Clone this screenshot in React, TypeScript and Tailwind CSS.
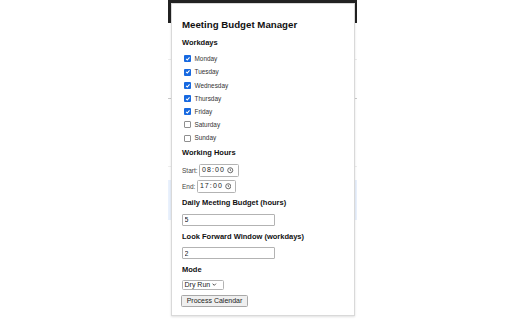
const days: [string, boolean][] = [
  ["Monday", true],
  ["Tuesday", true],
  ["Wednesday", true],
  ["Thursday", true],
  ["Friday", true],
  ["Saturday", false],
  ["Sunday", false],
];

const Check = ({ on }: { on: boolean }) =>
  on ? (
    <span className="flex h-[7px] w-[7px] items-center justify-center rounded-[1px] bg-[#1769e0]">
      <svg width="5.5" height="5.5" viewBox="0 0 10 10">
        <path d="M2 5.2 4.2 7.4 8.2 2.6" fill="none" stroke="#fff" strokeWidth="1.9" />
      </svg>
    </span>
  ) : (
    <span className="h-[7px] w-[7px] rounded-[1px] border border-[#8f8f8f] bg-white" />
  );

const Clock = () => (
  <svg width="6.5" height="6.5" viewBox="0 0 16 16">
    <circle cx="8" cy="8" r="6.3" fill="none" stroke="#222" strokeWidth="1.6" />
    <path d="M8 4.3V8.3l2.6 1.6" fill="none" stroke="#222" strokeWidth="1.5" />
  </svg>
);

const TimeField = ({ label, value }: { label: string; value: string }) => (
  <div className="flex h-[13px] items-center gap-[1.5px]">
    <span className="text-[6.5px] text-[#444]">{label}</span>
    <div className="flex h-[13px] w-[39.5px] items-center justify-between rounded-[1.5px] border border-[#b3b3b3] pl-[2px] pr-[4px]">
      <span className="text-[7px] tracking-[1.1px] text-[#222]">{value}</span>
      <Clock />
    </div>
  </div>
);

const Heading = ({ children, className }: { children: string; className: string }) => (
  <h3 className={`h-[10px] text-[7.5px] leading-[10px] font-bold text-[#111] ${className}`}>{children}</h3>
);

export default function App() {
  return (
    <div className="relative h-[320px] w-[512px] overflow-hidden bg-white font-['Liberation_Sans',Arial,sans-serif]">
      {/* page behind the popup */}
      <div className="ml-[168px] flex w-[189px] flex-col">
        <div className="h-[23px] bg-[#222]" />
        <div className="mt-[36px] h-px bg-[#ececec]" />
        <div className="mt-[38px] h-px bg-[#c9c9c9]" />
        <div className="mt-[67px] h-px bg-[#eeeeee]" />
        <div className="mt-[13px] h-[40px] bg-[#e9f1fd]" />
      </div>

      <div className="absolute left-[171px] top-[3px] flex h-[313px] w-[184px] flex-col border border-[#d9d9d9] bg-white pl-[10px] shadow-[0_1px_2px_rgba(0,0,0,0.12)]">
        <h1 className="mt-[15px] h-[12px] text-[9.7px] leading-[12px] font-bold text-[#111]">Meeting Budget Manager</h1>

        <Heading className="mt-[6.5px]">Workdays</Heading>
        <div className="mt-[4.9px] flex flex-col">
          {days.map(([d, on]) => (
            <label key={d} className="flex h-[13.2px] items-center gap-[3.5px] pl-[2px] text-[6.4px] text-[#333]">
              <Check on={on} />
              {d}
            </label>
          ))}
        </div>

        <Heading className="mt-[2.9px]">Working Hours</Heading>
        <div className="mt-[6.3px]">
          <TimeField label="Start:" value="08:00" />
        </div>
        <div className="mt-[3px]">
          <TimeField label="End:" value="17:00" />
        </div>

        <Heading className="mt-[5.3px]">Daily Meeting Budget (hours)</Heading>
        <input
          readOnly
          value="5"
          className="mt-[5.7px] h-[11.7px] w-[92.5px] rounded-[1px] border border-[#b3b3b3] px-[1.5px] text-[7px] text-[#222] outline-none"
        />

        <Heading className="mt-[6px]">Look Forward Window (workdays)</Heading>
        <input
          readOnly
          value="2"
          className="mt-[5.6px] h-[11.7px] w-[92.5px] rounded-[1px] border border-[#b3b3b3] px-[1.5px] text-[7px] text-[#222] outline-none"
        />

        <Heading className="mt-[6px]">Mode</Heading>
        <div className="mt-[5px] flex h-[10px] w-[41.5px] items-center gap-[2px] rounded-[1.5px] border border-[#b3b3b3] pl-[1.5px] text-[7px] text-[#222]">
          <span>Dry Run</span>
          <svg width="4.5" height="3" viewBox="0 0 8 5">
            <path d="M1 1l3 3 3-3" fill="none" stroke="#222" strokeWidth="1.4" />
          </svg>
        </div>

        <button className="-ml-px mt-[5px] flex h-[12.3px] w-[67px] items-center justify-center rounded-[1.5px] border border-[#a8a8a8] bg-[#efefef] text-[7px] text-[#222]">
          Process Calendar
        </button>
      </div>
    </div>
  );
}
